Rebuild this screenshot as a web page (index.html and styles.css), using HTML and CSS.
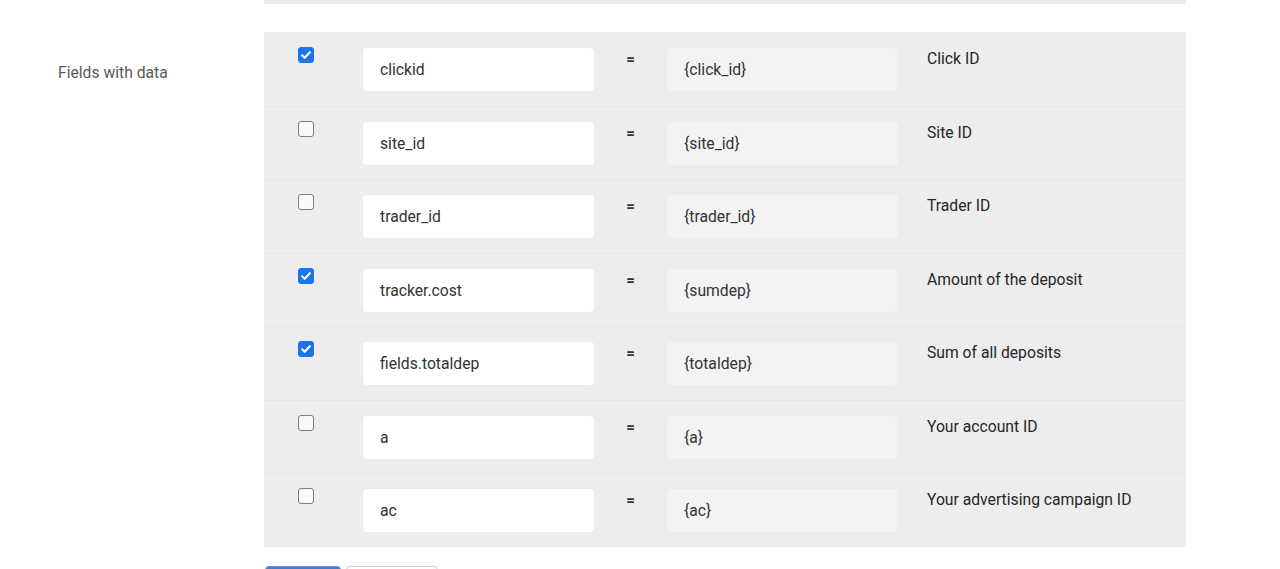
FILE: index.html
```html
<!DOCTYPE html>
<html lang="en">
<head>
<meta charset="utf-8">
<title>Fields with data</title>
<link rel="stylesheet" href="styles.css">
</head>
<body>
<div class="page">
  <div class="grid top">
    <div></div>
    <div class="strip"></div>
  </div>

  <div class="grid section">
    <div class="label">Fields with data</div>
    <div class="table">
      <div class="row">
        <span class="check on"><svg viewBox="0 0 16 16" width="16" height="16"><path d="M3.6 8.4l2.9 2.8 5.9-6.4" fill="none" stroke="#fff" stroke-width="2.4" stroke-linecap="round" stroke-linejoin="round"/></svg></span>
        <div class="input">clickid</div>
        <div class="eq">=</div>
        <div class="input ro">{click_id}</div>
        <div class="desc">Click ID</div>
      </div>
      <div class="row">
        <span class="check"></span>
        <div class="input">site_id</div>
        <div class="eq">=</div>
        <div class="input ro">{site_id}</div>
        <div class="desc">Site ID</div>
      </div>
      <div class="row">
        <span class="check"></span>
        <div class="input">trader_id</div>
        <div class="eq">=</div>
        <div class="input ro">{trader_id}</div>
        <div class="desc">Trader ID</div>
      </div>
      <div class="row">
        <span class="check on"><svg viewBox="0 0 16 16" width="16" height="16"><path d="M3.6 8.4l2.9 2.8 5.9-6.4" fill="none" stroke="#fff" stroke-width="2.4" stroke-linecap="round" stroke-linejoin="round"/></svg></span>
        <div class="input">tracker.cost</div>
        <div class="eq">=</div>
        <div class="input ro">{sumdep}</div>
        <div class="desc">Amount of the deposit</div>
      </div>
      <div class="row">
        <span class="check on"><svg viewBox="0 0 16 16" width="16" height="16"><path d="M3.6 8.4l2.9 2.8 5.9-6.4" fill="none" stroke="#fff" stroke-width="2.4" stroke-linecap="round" stroke-linejoin="round"/></svg></span>
        <div class="input">fields.totaldep</div>
        <div class="eq">=</div>
        <div class="input ro">{totaldep}</div>
        <div class="desc">Sum of all deposits</div>
      </div>
      <div class="row">
        <span class="check"></span>
        <div class="input">a</div>
        <div class="eq">=</div>
        <div class="input ro">{a}</div>
        <div class="desc">Your account ID</div>
      </div>
      <div class="row">
        <span class="check"></span>
        <div class="input">ac</div>
        <div class="eq">=</div>
        <div class="input ro">{ac}</div>
        <div class="desc">Your advertising campaign ID</div>
      </div>
    </div>
  </div>

  <div class="grid actions">
    <div></div>
    <div class="buttons">
      <button class="btn primary">Save</button>
      <button class="btn">Cancel</button>
    </div>
  </div>
</div>
</body>
</html>
```

FILE: styles.css
```css
html, body {
  margin: 0;
  padding: 0;
  background: #ffffff;
  font-family: Roboto, "Liberation Sans", Arial, sans-serif;
  overflow: hidden;
}

.page {
  width: 1280px;
}

.grid {
  display: grid;
  grid-template-columns: 264px 922px;
}

.strip {
  height: 4px;
  background: #ececec;
}

.section {
  margin-top: 28px;
}

.label {
  padding: 31px 0 0 58px;
  font-size: 15.7px;
  line-height: 20px;
  color: #5a5a5a;
}

.table {
  display: grid;
  grid-template-rows: repeat(7, 1fr);
  height: 515px;
  background: #ededed;
}

.row {
  display: flex;
  align-items: flex-start;
  padding: 16px 0 0 34px;
  border-top: 1px solid #e6e6e6;
}

.row:first-child {
  border-top: none;
}

.row:not(:first-child) {
  padding-top: 15px;
}

.check {
  box-sizing: border-box;
  width: 16px;
  height: 16px;
  margin-top: -1px;
  border: 1px solid #7d7d7d;
  border-radius: 3px;
  background: #fafafa;
  display: flex;
  align-items: center;
  justify-content: center;
  flex: none;
}

.check.on {
  background: #1a73f0;
  border-color: #1a73f0;
}

.check svg {
  width: 14px;
  height: 14px;
}

.input {
  box-sizing: border-box;
  width: 231px;
  height: 43px;
  margin-left: 49px;
  padding: 0 17px;
  border-radius: 4px;
  background: #ffffff;
  font-size: 15.7px;
  line-height: 43px;
  color: #333333;
  flex: none;
}

.input.ro {
  margin-left: 0;
  background: #f3f3f3;
}

.eq {
  width: 73px;
  flex: none;
  text-align: center;
  font-size: 15px;
  font-weight: 700;
  line-height: 22px;
  color: #333333;
}

.desc {
  margin-left: 29px;
  font-size: 15.7px;
  line-height: 22px;
  color: #262626;
}

.actions {
  margin-top: 19px;
}

.buttons {
  display: flex;
  gap: 5px;
  padding-left: 1px;
}

.btn {
  height: 36px;
  padding: 0 14px;
  border: 1px solid #cfcfcf;
  border-radius: 4px;
  background: #ffffff;
  font-family: Roboto, "Liberation Sans", Arial, sans-serif;
  font-size: 14px;
  color: #333333;
  width: 92px;
}

.btn.primary {
  width: 76px;
  background: #3d7dd6;
  border-color: #5d95e0;
  color: #ffffff;
}
```
